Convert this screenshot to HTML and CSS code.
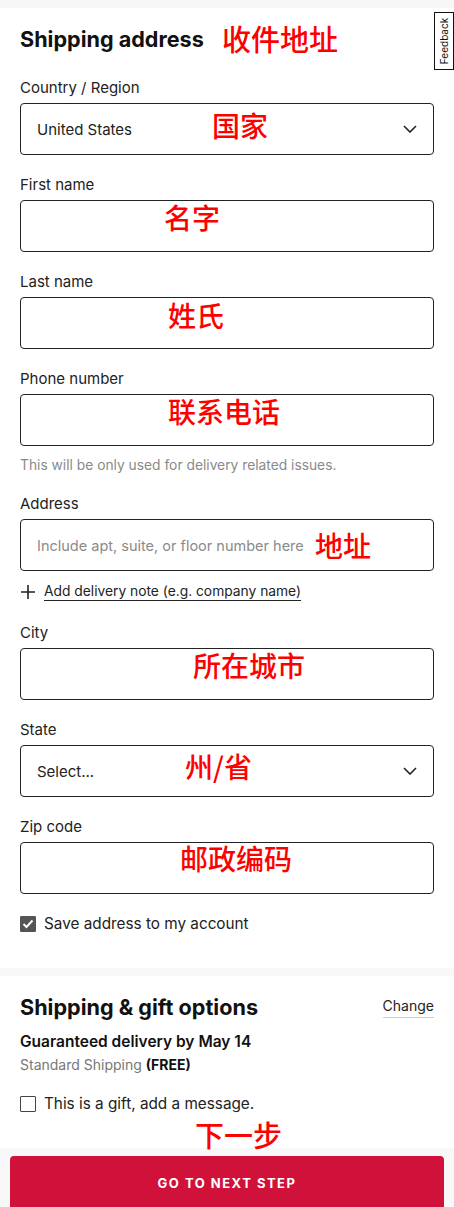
FILE: index.html
```html
<!DOCTYPE html>
<html>
<head>
  <title>Checkout - Shipping</title>
  <link rel="stylesheet" href="styles.css">
</head>
<body>
  <div class="top-strip"></div>

  <div class="feedback-tab"><span>Feedback</span></div>

  <section class="panel address-panel">
    <div class="panel-head">
      <h2>Shipping address</h2>
      <span class="note note-title">收件地址</span>
    </div>

    <div class="field first-field">
      <label>Country / Region</label>
      <div class="box select-box">
        <span>United States</span>
        <svg class="chevron" width="14" height="8" viewBox="0 0 14 8"><path d="M1 1l6 6 6-6" fill="none" stroke="#222" stroke-width="1.6"/></svg>
        <span class="note" style="left:191px;top:6px">国家</span>
      </div>
    </div>

    <div class="field">
      <label>First name</label>
      <div class="box">
        <span class="note" style="left:143px;top:1px">名字</span>
      </div>
    </div>

    <div class="field">
      <label>Last name</label>
      <div class="box">
        <span class="note" style="left:147px;top:2px">姓氏</span>
      </div>
    </div>

    <div class="field">
      <label>Phone number</label>
      <div class="box">
        <span class="note" style="left:147px;top:1px">联系电话</span>
      </div>
      <p class="hint">This will be only used for delivery related issues.</p>
    </div>

    <div class="field field-address">
      <label>Address</label>
      <div class="box">
        <span class="placeholder">Include apt, suite, or floor number here</span>
        <span class="note" style="left:294px;top:10px">地址</span>
      </div>
      <div class="add-note">
        <svg width="16" height="16" viewBox="0 0 16 16"><path d="M8 1v14M1 8h14" stroke="#222" stroke-width="1.6"/></svg>
        <span>Add delivery note (e.g. company name)</span>
      </div>
    </div>

    <div class="field">
      <label>City</label>
      <div class="box">
        <span class="note" style="left:172px;top:1px">所在城市</span>
      </div>
    </div>

    <div class="field">
      <label>State</label>
      <div class="box select-box">
        <span>Select...</span>
        <svg class="chevron" width="14" height="8" viewBox="0 0 14 8"><path d="M1 1l6 6 6-6" fill="none" stroke="#222" stroke-width="1.6"/></svg>
        <span class="note" style="left:164px;top:5px">州/省</span>
      </div>
    </div>

    <div class="field">
      <label>Zip code</label>
      <div class="box">
        <span class="note" style="left:159px;top:0px">邮政编码</span>
      </div>
    </div>

    <div class="check-row">
      <span class="checkbox checked">
        <svg width="12" height="10" viewBox="0 0 12 10"><path d="M1.5 5l3 3 6-6.5" fill="none" stroke="#fff" stroke-width="2"/></svg>
      </span>
      <span>Save address to my account</span>
    </div>
  </section>

  <div class="divider"></div>

  <section class="panel gift-panel">
    <div class="panel-head">
      <h2>Shipping &amp; gift options</h2>
      <a class="change-link">Change</a>
    </div>
    <p class="delivery">Guaranteed delivery by May 14</p>
    <p class="shipping-type">Standard Shipping <b>(FREE)</b></p>
    <div class="check-row gift-row">
      <span class="checkbox"></span>
      <span>This is a gift, add a message.</span>
    </div>
    <span class="note note-next">下一步</span>
  </section>

  <div class="footer-bar">
    <button class="next-button">GO TO NEXT STEP</button>
  </div>
</body>
</html>
```

FILE: styles.css
```css
body {
  margin: 0;
  font-family: Inter, "Noto Sans", Arial, sans-serif;
  color: #222;
  background: #fff;
}
.top-strip {
  height: 8px;
  background: #f7f7f7;
}
.feedback-tab {
  position: absolute;
  left: 434px;
  top: 12px;
  width: 18px;
  height: 56px;
  border: 1px solid #111;
  background: #fff;
  display: flex;
  align-items: center;
  justify-content: center;
}
.feedback-tab span {
  transform: rotate(-90deg);
  font-size: 10px;
  white-space: nowrap;
  color: #111;
}
.panel {
  padding: 0 20px;
  position: relative;
}
.address-panel {
  padding-top: 17px;
  padding-bottom: 34px;
}
.panel-head {
  display: flex;
  justify-content: space-between;
  align-items: center;
  position: relative;
}
.panel-head h2 {
  margin: 0;
  font-size: 21.6px;
  line-height: 28px;
  font-weight: 700;
  color: #111;
}
.note {
  position: absolute;
  font-family: "Noto Sans CJK SC", sans-serif;
  font-weight: 500;
  font-size: 28px;
  line-height: 30px;
  color: #f00;
  white-space: nowrap;
}
.note-title {
  left: 202px;
  top: -2px;
  font-size: 29px;
}
.field {
  margin-top: 20px;
}
.first-field {
  margin-top: 25px;
}
.field label {
  display: block;
  font-size: 15px;
  line-height: 20px;
  margin-bottom: 5px;
}
.box {
  position: relative;
  height: 50px;
  border: 1px solid #222;
  border-radius: 4px;
  display: flex;
  align-items: center;
  padding: 0 16px;
  font-size: 15px;
}
.select-box {
  justify-content: space-between;
}
.placeholder {
  color: #8a8a8a;
  font-size: 14.5px;
}
.hint {
  margin: 10px 0 0;
  font-size: 13.8px;
  line-height: 18px;
  color: #8a8a8a;
}
.field-address {
  margin-top: 20px;
}
.add-note {
  margin-top: 12px;
  display: flex;
  align-items: center;
  gap: 8px;
  font-size: 13.8px;
  line-height: 20px;
}
.add-note span {
  border-bottom: 1px solid #222;
  line-height: 17px;
}
.field-address + .field {
  margin-top: 22px;
}
.check-row {
  margin-top: 20px;
  display: flex;
  align-items: center;
  gap: 8px;
  font-size: 15.3px;
  line-height: 20px;
}
.checkbox {
  width: 14px;
  height: 14px;
  border: 1px solid #444;
  border-radius: 1px;
  display: flex;
  align-items: center;
  justify-content: center;
}
.checkbox.checked {
  background: #555;
  border-color: #555;
}
.divider {
  height: 8px;
  background: #f8f8f8;
}
.gift-panel {
  padding-top: 17px;
  padding-bottom: 34px;
}
.change-link {
  font-size: 14px;
  line-height: 18px;
  border-bottom: 1px solid #ccc;
  padding-bottom: 2px;
  color: #222;
}
.delivery {
  margin: 11px 0 0;
  font-size: 15.5px;
  line-height: 20px;
  font-weight: 600;
  color: #111;
}
.shipping-type {
  margin: 4px 0 0;
  font-size: 14px;
  line-height: 18px;
  color: #777;
}
.shipping-type b {
  color: #111;
}
.gift-row {
  margin-top: 20px;
}
.note-next {
  left: 195px;
  bottom: -1px;
  font-size: 29px;
}
.footer-bar {
  background: #f8f8f8;
  padding: 8px 10px 0;
  height: 51px;
  overflow: hidden;
}
.next-button {
  display: block;
  width: 100%;
  height: 56px;
  border: none;
  border-radius: 4px 4px 0 0;
  background: #d0123a;
  color: #fff;
  font-family: Inter, "Noto Sans", Arial, sans-serif;
  font-size: 13px;
  font-weight: 700;
  letter-spacing: 1.5px;
  padding-bottom: 4px;
}
```
